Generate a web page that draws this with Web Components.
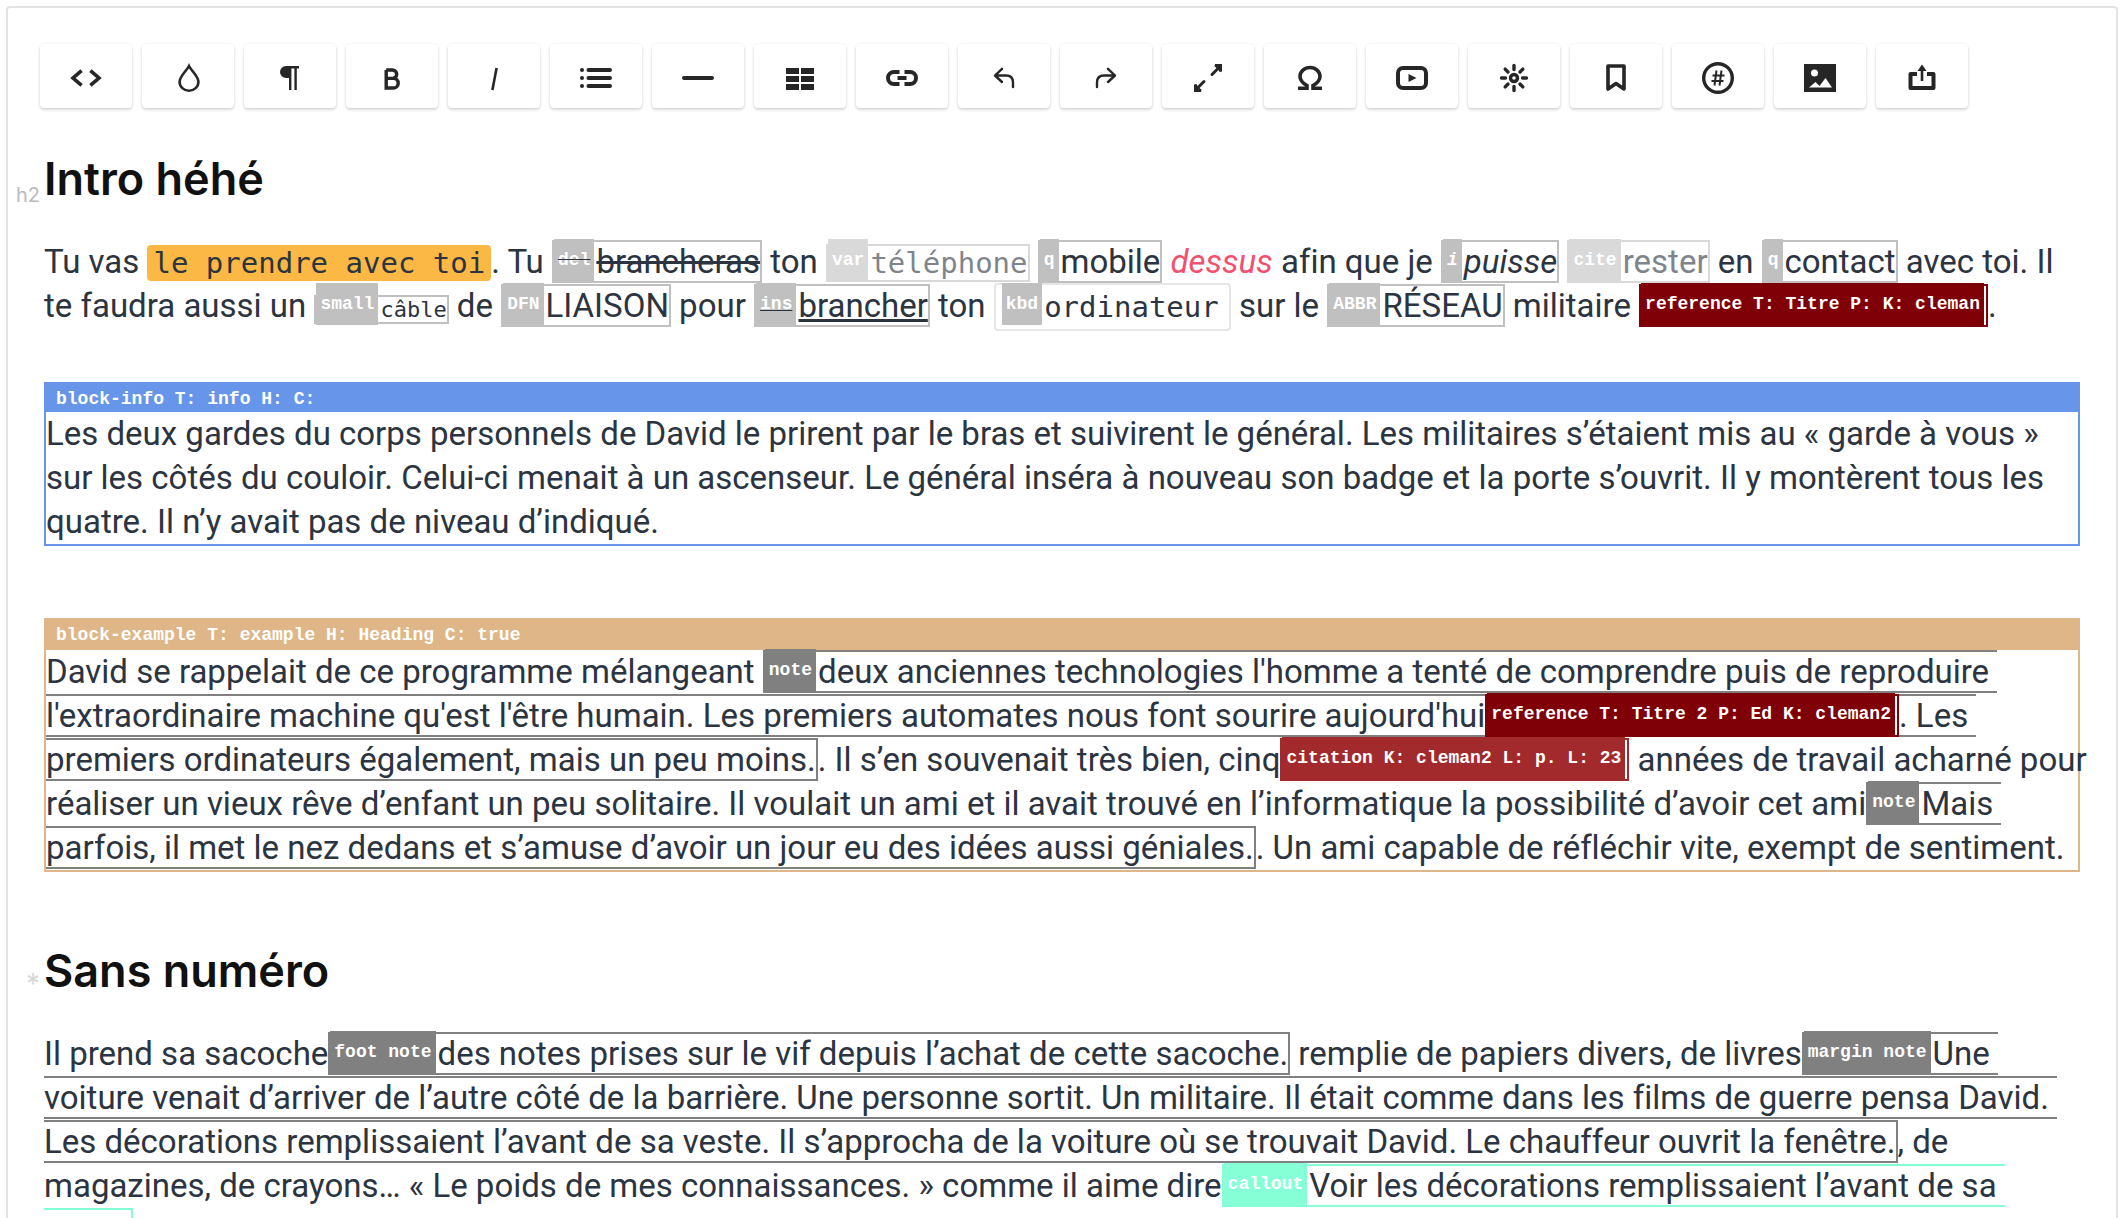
<!DOCTYPE html>
<html lang="fr">
<head>
<meta charset="utf-8">
<title>Éditeur</title>
<style>
html { height: 100%; overflow: hidden; }
body {
  margin: 0; padding: 6px 10px 0 6px; height: 100%; box-sizing: border-box; overflow: hidden;
  background: #fff; color: #2b3440;
  font-family: Roboto, "Liberation Sans", sans-serif; font-size: 33px; line-height: 44px;
  font-variant-ligatures: none;
}
</style>
</head>
<body>
<editor-frame>
  <tool-bar slot="tools"></tool-bar>

  <doc-heading class="first" marker="h2">Intro héhé</doc-heading>
  <doc-paragraph>Tu vas <inline-tag kind="code">le prendre avec toi</inline-tag>. Tu <inline-tag kind="del" label="del">brancheras</inline-tag> ton <inline-tag kind="var" label="var">téléphone</inline-tag> <inline-tag label="q">mobile</inline-tag> <inline-tag kind="em">dessus</inline-tag> afin que je <inline-tag kind="i" label="i">puisse</inline-tag> <inline-tag kind="cite" label="cite">rester</inline-tag> en <inline-tag label="q">contact</inline-tag> avec toi. Il te faudra aussi un <inline-tag kind="small" label="small">câble</inline-tag> de <inline-tag label="DFN">LIAISON</inline-tag> pour <inline-tag kind="ins" label="ins">brancher</inline-tag> ton <inline-tag kind="kbd" label="kbd">ordinateur</inline-tag> sur le <inline-tag label="ABBR">RÉSEAU</inline-tag> militaire <inline-tag kind="reference" label="reference T: Titre P: K: cleman"></inline-tag>.</doc-paragraph>

  <doc-block kind="info" label="block-info T: info H: C:">Les deux gardes du corps personnels de David le prirent par le bras et suivirent le général. Les militaires s’étaient mis au « garde à vous » sur les côtés du couloir. Celui-ci menait à un ascenseur. Le général inséra à nouveau son badge et la porte s’ouvrit. Il y montèrent tous les quatre. Il n’y avait pas de niveau d’indiqué.</doc-block>

  <doc-block kind="example" label="block-example T: example H: Heading C: true">David se rappelait de ce programme mélangeant <inline-tag kind="note" label="note">deux anciennes technologies l'homme a tenté de comprendre puis de reproduire l'extraordinaire machine qu'est l'être humain. Les premiers automates nous font sourire aujourd'hui<inline-tag kind="reference" label="reference T: Titre 2 P: Ed K: cleman2"></inline-tag>. Les premiers ordinateurs également, mais un peu moins.</inline-tag>. Il s’en souvenait très bien, cinq<inline-tag kind="citation" label="citation K: cleman2 L: p. L: 23"></inline-tag> années de travail acharné pour réaliser un vieux rêve d’enfant un peu solitaire. Il voulait un ami et il avait trouvé en l’informatique la possibilité d’avoir cet ami<inline-tag kind="note" label="note">Mais parfois, il met le nez dedans et s’amuse d’avoir un jour eu des idées aussi géniales.</inline-tag>. Un ami capable de réfléchir vite, exempt de sentiment.</doc-block>

  <doc-heading marker="*">Sans numéro</doc-heading>
  <doc-paragraph>Il prend sa sacoche<inline-tag kind="note" label="foot note">des notes prises sur le vif depuis l’achat de cette sacoche.</inline-tag> remplie de papiers divers, de livres<inline-tag kind="note" label="margin note">Une voiture venait d’arriver de l’autre côté de la barrière. Une personne sortit. Un militaire. Il était comme dans les films de guerre pensa David. Les décorations remplissaient l’avant de sa veste. Il s’approcha de la voiture où se trouvait David. Le chauffeur ouvrit la fenêtre.</inline-tag>, de magazines, de crayons… « Le poids de mes connaissances. » comme il aime dire<inline-tag kind="callout" label="callout">Voir les décorations remplissaient l’avant de sa veste.</inline-tag></doc-paragraph>
</editor-frame>

<script>
function shadow(el, html) {
  const root = el.attachShadow({ mode: "open" });
  root.innerHTML = html.trim();
  return root;
}

customElements.define("editor-frame", class extends HTMLElement {
  connectedCallback() {
    shadow(this, `
      <style>
        :host { display: block; box-sizing: border-box; min-height: 100%; background: #fff;
          border: 2px solid #e3e3e3; border-bottom: 0; border-radius: 4px 4px 0 0; padding: 36px 36px 0; }
        header { margin: 0 0 0 -4px; }
        main { display: flow-root; }
      </style>
      <header><slot name="tools"></slot></header>
      <main><slot></slot></main>`);
  }
});

const S = (w, body) => `<g fill="none" stroke="currentColor" stroke-width="${w}">${body}</g>`;
const rays = [0, 45, 90, 135, 180, 225, 270, 315]
  .map(a => `<path d="M20 7.5V11.5" transform="rotate(${a} 20 20)"/>`).join("");
const ICONS = [
  ["Code", S(3.6, `<path d="M15.6 12.6 7 20l8.6 7.4" /><path d="M24.4 12.6 33 20l-8.6 7.4"/>`)],
  ["Couleur", S(2.6, `<path d="M21 8C18.500 13 11.600 18 11.600 24a9.400 8.700 0 0 0 18.800 0c0-6-6.900-11-9.400-16z"/>`)],
  ["Paragraphe", `<path fill="currentColor" d="M16 8H29v2.600h-2.200V32h-2.400V10.600h-3V32h-2.400V20h-3A6 6 0 0 1 16 8z"/>`],
  ["Gras", S(3.4, `<path d="M14.200 11.700H20.500a4.200 4.200 0 0 1 0 8.400H14.200M14.200 20.100H21.400a4.800 4.800 0 0 1 0 9.600H14.200V11.700" transform="translate(0 .3)"/>`)],
  ["Italique", S(2.6, `<path d="M22.600 10 18.400 32"/>`)],
  ["Liste", S(4, `<path stroke-linecap="round" d="M12.500 12H34M12.500 20H34M12.500 28H34"/>`) + `<g fill="currentColor"><circle cx="6" cy="12" r="2"/><circle cx="6" cy="20" r="2"/><circle cx="6" cy="28" r="2"/></g>`],
  ["Filet", S(4, `<path stroke-linecap="round" d="M6 20H34"/>`)],
  ["Tableau", `<path fill="currentColor" d="M6 10h13v6H6zM21 10h13v6H21zM6 18h13v6H6zM21 18h13v6H21zM6 26h13v6H6zM21 26h13v6H21z"/>`],
  ["Lien", S(4, `<path d="M17.500 14H12a6 6 0 0 0 0 12h5.500M22.500 14H28a6 6 0 0 1 0 12h-5.500M15.500 20h9"/>`)],
  ["Annuler", S(2.4, `<path stroke-linecap="round" stroke-linejoin="round" d="M18 10.800 11 17.500l7 6.500M11.500 17.500h10.500q7 0 7 7V29"/>`)],
  ["Rétablir", S(2.4, `<path stroke-linecap="round" stroke-linejoin="round" d="M22 10.800 29 17.500l-7 6.500M28.500 17.500H18q-7 0-7 7V29"/>`)],
  ["Plein écran", S(3, `<path stroke-linecap="round" d="M24 16.500 31 9.500M16 23.500 9 30.500"/>`) + `<path fill="currentColor" d="M27 6H34v7.500l-2.500.500-1-2-2.500-2.500-1.500-1zM13 34H6V26.500l2.500-.500 1 2 2.500 2.500 1.500 1z"/>`],
  ["Caractère spécial", S(3.6, `<path d="M8 30.200H17V27.500C12.500 25 10 22 10 18.500a10 9 0 0 1 20 0c0 3.500-2.500 6.500-7 9v2.700H32"/>`)],
  ["Vidéo", S(4, `<rect x="6" y="10" width="28" height="20" rx="5"/>`) + `<path fill="currentColor" d="M16.500 16v8l8-4z"/>`],
  ["Lumière", S(3.4, `<g stroke-linecap="round">${rays}</g><circle cx="20" cy="20" r="3.500"/>`)],
  ["Signet", S(3.6, `<path d="M12 8H28V31L20 25.500 12 31z" stroke-linejoin="round"/>`)],
  ["Index", S(3.4, `<circle cx="20" cy="20" r="14.300"/>`) + S(2, `<path d="M18.500 12.500 16.500 27.500M23.500 12.500 21.500 27.500M14.500 17.500H26.500M13.500 23H25.500"/>`)],
  ["Image", `<path fill="currentColor" fill-rule="evenodd" d="M4 6h32v28H4zM11 15a3.500 3.500 0 1 0 7 0a3.500 3.500 0 1 0-7 0M9 29.500h23L25.500 20 19.500 28l-4-4z"/>`],
  ["Exporter", S(4, `<path d="M15 16H8.500V30h23V16H25" stroke-linejoin="round"/>`) + S(2.6, `<path d="M20 23V11"/>`) + `<path fill="currentColor" d="M15.500 13 20 6.500l4.500 6.500z"/>`]
];

customElements.define("tool-button", class extends HTMLElement {
  connectedCallback() {
    const [name, drawing] = ICONS[+this.getAttribute("icon")];
    shadow(this, `
      <style>
        :host { display: block; }
        button { display: flex; align-items: center; justify-content: center; width: 92px; height: 64px;
          padding: 4px 0 0; border: 0; border-radius: 4px; background: #fff; color: #262626;
          box-shadow: 0 2px 3px rgba(0,0,0,.14), 0 0 3px rgba(0,0,0,.08); }
        svg { display: block; width: 40px; height: 40px; overflow: visible; }
      </style>
      <button type="button" aria-label="${name}"><svg viewBox="0 0 40 40" aria-hidden="true">${drawing}</svg></button>`);
  }
});

customElements.define("tool-bar", class extends HTMLElement {
  connectedCallback() {
    shadow(this, `
      <style>
        :host { display: flex; flex-wrap: wrap; gap: 10px; }
      </style>
      ${ICONS.map((_, i) => `<tool-button icon="${i}"></tool-button>`).join("")}`);
  }
});

customElements.define("doc-heading", class extends HTMLElement {
  connectedCallback() {
    shadow(this, `
      <style>
        :host { display: block; margin: 69px 0 0; position: relative; color: #111; font-family: Inter, sans-serif; }
        :host(.first) { margin-top: 41px; }
        h2 { margin: 0; font-size: 45px; line-height: 60px; font-weight: 600; }
        .marker { position: absolute; right: 100%; bottom: 0; margin-right: 4px; font-size: 20px; line-height: 28px; color: #bbb; }
        :host([marker="*"]) .marker { font-size: 28px; line-height: 34px; color: #d8d8d8; }
      </style>
      <span class="marker">${this.getAttribute("marker")}</span><h2><slot></slot></h2>`);
  }
});

customElements.define("doc-paragraph", class extends HTMLElement {
  connectedCallback() {
    shadow(this, `
      <style>
        :host { display: block; margin: 31px 0 0; white-space: pre-wrap; }
        p { margin: 0; }
      </style><p><slot></slot></p>`);
  }
});

customElements.define("doc-block", class extends HTMLElement {
  connectedCallback() {
    shadow(this, `
      <style>
        :host { display: block; margin: 54px 0 0; border: 2px solid var(--tint); white-space: pre-wrap; }
        :host([kind="info"]) { --tint: #6695ea; }
        :host([kind="example"]) { --tint: #deb688; margin-top: 72px; }
        header { background: var(--tint); color: #fff; padding: 2px 10px 0; line-height: 26px;
          font-family: "Liberation Mono", monospace; font-size: 18px; font-weight: 700; }
        :host([kind="example"]) header { padding-bottom: 2px; }
        p { margin: 0 -12px 0 0; }
      </style><header>${this.getAttribute("label")}</header><p><slot></slot></p>`);
  }
});

customElements.define("inline-tag", class extends HTMLElement {
  connectedCallback() {
    const label = this.getAttribute("label");
    shadow(this, `
      <style>
        :host { --tint: #c0c0c0; display: inline; border: 2px solid var(--tint); }
        :host([kind="note"]) { --tint: #808080; }
        :host([kind="callout"]) { --tint: #86ffd7; }
        :host([kind="reference"]) { --tint: #7f0006; }
        :host([kind="citation"]) { --tint: #a32a2c; }
        :host([kind="del"]) span { text-decoration: line-through #2b3440; }
        :host([kind="ins"]) span { text-decoration: underline #2b3440; }
        :host([kind="i"]) { font-style: italic; }
        :host([kind="em"]) { border: 0; font-style: italic; color: #f2506f; }
        :host([kind="cite"]), :host([kind="var"]) { opacity: .6; }
        :host([kind="code"]), :host([kind="var"]), :host([kind="kbd"]), :host([kind="small"]) {
          font-family: "DejaVu Sans Mono", monospace; font-size: 29px; line-height: 0; }
        :host([kind="code"]) { border: 0; border-radius: 4px; padding: 1px 6px; background: #fcb844; }
        :host([kind="small"]) { font-size: 22px; }
        :host([kind="kbd"]) { border-color: #e6e6e6; border-radius: 4px; padding: 5px 10px 5px 6px; }
        .label { background: var(--tint); color: #fff; padding: 11px 4px; margin-right: 2px;
          vertical-align: 8px; line-height: 0; white-space: nowrap;
          font-family: "Liberation Mono", monospace; font-size: 18px; font-weight: 700; }
        :host([kind="kbd"]) .label { --tint: #c0c0c0; }
      </style>${label ? `<span class="label">${label}</span>` : ""}<span><slot></slot></span>`);
  }
});
</script>
</body>
</html>
